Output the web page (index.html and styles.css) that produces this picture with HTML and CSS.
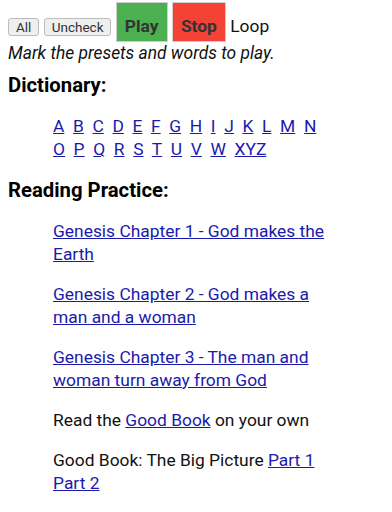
FILE: index.html
```html
<!DOCTYPE html>
<html lang="en">
<head>
<meta charset="utf-8">
<title>Presets</title>
<link rel="stylesheet" href="styles.css">
</head>
<body>
<div class="controls"><button class="btn">All</button> <button class="btn">Uncheck</button> <button class="big play">Play</button> <button class="big stop">Stop</button> Loop<br><i class="hint">Mark the presets and words to play.</i></div>
<h3 class="heading">Dictionary:</h3>
<p class="indent letters"><a href="#">A</a>&nbsp; <a href="#">B</a>&nbsp; <a href="#">C</a>&nbsp; <a href="#">D</a>&nbsp; <a href="#">E</a>&nbsp; <a href="#">F</a>&nbsp; <a href="#">G</a>&nbsp; <a href="#">H</a>&nbsp; <a href="#">I</a>&nbsp; <a href="#">J</a>&nbsp; <a href="#">K</a>&nbsp; <a href="#">L</a>&nbsp; <a href="#">M</a>&nbsp; <a href="#">N</a>&nbsp; <a href="#">O</a>&nbsp; <a href="#">P</a>&nbsp; <a href="#">Q</a>&nbsp; <a href="#">R</a>&nbsp; <a href="#">S</a>&nbsp; <a href="#">T</a>&nbsp; <a href="#">U</a>&nbsp; <a href="#">V</a>&nbsp; <a href="#">W</a>&nbsp; <a href="#">XYZ</a></p>
<h3 class="heading">Reading Practice:</h3>
<p class="indent"><a href="#">Genesis Chapter 1 - God makes the Earth</a></p>
<p class="indent"><a href="#">Genesis Chapter 2 - God makes a man and a woman</a></p>
<p class="indent"><a href="#">Genesis Chapter 3 - The man and woman turn away from God</a></p>
<p class="indent">Read the <a href="#">Good Book</a> on your own</p>
<p class="indent">Good Book: The Big Picture <a href="#">Part 1</a> <a href="#">Part 2</a></p>
</body>
</html>
```
FILE: styles.css
```css
html {
  background: #fff;
}

body {
  margin: 2px 8px 8px 8px;
  font-family: Roboto, "Noto Sans", sans-serif;
  font-size: 17.4px;
  line-height: 23px;
  color: #111;
  background: #fff;
}

.controls {
  margin: 0;
}

.btn {
  font-family: Roboto, "Noto Sans", sans-serif;
  font-size: 13.5px;
  line-height: 14px;
  padding: 1px 7px;
  margin: 0;
  color: #333;
  background: #efefef;
  border: 1px solid #bdbdbd;
  border-radius: 3px;
}

.big {
  font-family: Roboto, "Noto Sans", sans-serif;
  font-size: 17.4px;
  font-weight: bold;
  line-height: 20px;
  padding: 13px 8px 5px 8px;
  margin: 0;
  color: #333;
  border: 1px solid #cfcfcf;
  border-radius: 0;
}

.play {
  background: #4caf50;
}

.stop {
  background: #f44336;
}

.hint {
  font-style: italic;
}

.heading {
  font-size: 20.3px;
  line-height: 24px;
  font-weight: bold;
  color: #000;
  margin: 8px 0 18px 0;
}

.indent {
  margin: 17px 50px 17px 45px;
}

a {
  color: #1a1aad;
  text-decoration: underline;
}
```
